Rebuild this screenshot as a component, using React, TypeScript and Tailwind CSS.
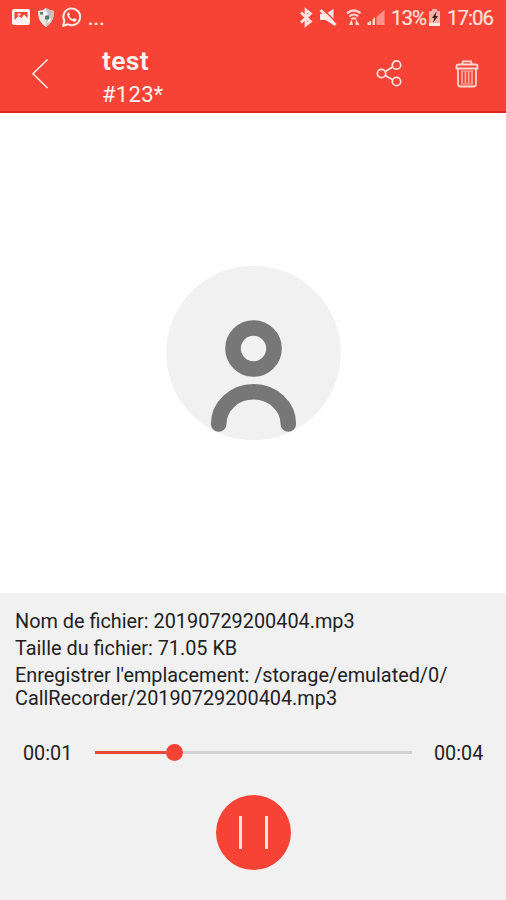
function StatusBar() {
  return (
    <div className="flex h-[36px] items-center text-[20.500px] leading-[36px] text-[#ffe3df]">
      <svg width="506" height="36" viewBox="0 0 506 36" className="-mr-[506px] shrink-0" fill="none">
        {/* gallery */}
        <path fillRule="evenodd" fill="#fff4f2" d="M14 9h14q2 0 2 2v12q0 2-2 2H14q-2 0-2-2V11q0-2 2-2Zm.5 3v8l4-4 3 2 2.500-3.500 3.500 3.500V12Z" />
        <path fill="#fff4f2" d="M17.500 13.500h3v2h-3Z" />
        {/* shield */}
        <path fill="#ebe8e4" d="M46 8q4 3 8 3c0 7-2 12-8 16-6-4-8-9-8-16q4 0 8-3Z" />
        <path fill="#c4c4be" d="M46 8q4 3 8 3c0 7-2 12-8 16Z" />
        <path fill="#5b7a70" d="M40 12h3v2.500h-3Zm5 3.500h4v4h-4Z" />
        <path fill="#fff" d="m43 13 3-2 2 3-3 2Zm5 7 3-2-1 4-3 1Z" />
        {/* whatsapp */}
        <path stroke="#ffebe8" strokeWidth="2" strokeLinejoin="round" d="m63 26 1.400-5a8.400 8.400 0 1 1 3.200 3.200Z" />
        <path fill="#ffebe8" d="M68.400 12.200c-1 .5-1.700 1.800-1.100 3.600 1 3 3.800 5.200 6.400 5.800 1.600.3 3-.8 3-2.400l-2.600-1.300-1.400 1.400c-1.800-.8-2.900-2-3.600-3.500l1.100-1.200Z" />
        {/* bluetooth */}
        <path stroke="#ffe3df" strokeWidth="2.7" d="m301 12.500 9.500 9-4.500 3.500V10l4.500 3.500-9.500 9" />
        {/* muted */}
        <path fill="#ffe9e6" d="M320 14h5.500l8-5v16l-8-5H320Z" />
        <path stroke="#f64336" strokeWidth="1.500" d="m322.500 8.500 14 14" />
        <path stroke="#ffe9e6" strokeWidth="2.800" d="m320.500 10 15 15" />
        {/* wifi */}
        <g stroke="#ffd5cf">
          <path strokeWidth="2.400" d="M347 13.300q6.800-5.600 13.600 0" />
          <path strokeWidth="2" d="M349.300 16.500q4.500-4 9 0M351.300 19.300q2.500-2 5 0" />
        </g>
        <path fill="#ffe3df" d="m351.500 19.500 1.500 5.500h-4Zm4.500 0 3.500 5.500h-4Z" />
        {/* signal */}
        <path fill="#ff9188" d="m376.500 17 8-7v15h-8Z" />
        <path fill="#ffd5cf" d="M367.500 25v-2.500l3.500-1.500v4Zm5 0v-5.500l2.500-2.500v8Z" />
        {/* battery */}
        <path fill="#ffb1a9" d="M432 9h5v2h3v15h-11V11h3Z" />
        <path fill="#ffe9e6" d="M429 23h11v3h-11Z" />
        <path fill="#352523" d="m436 12-4 6h2.200l-1.200 5 5-7h-2.500l1-4Z" />
      </svg>
      <span className="ml-[88px] w-[303px] tracking-[0.200px] [-webkit-text-stroke:0.500px_#ffe3df]">...</span>
      <span className="w-[56px] tracking-[-1px] [-webkit-text-stroke:0.200px_#ffe3df]">13%</span>
      <span className="tracking-[-1px] [-webkit-text-stroke:0.200px_#ffe3df]">17:06</span>
    </div>
  )
}

function Header() {
  return (
    <header className="h-[113px] shrink-0 border-b-2 border-[#e0251c] bg-[#f64336] text-[#fff3f1]">
      <StatusBar />
      <div className="flex h-[75px] items-start">
        <button aria-label="Retour" className="ml-[31px] mt-[22px]">
          <svg width="18" height="32" viewBox="0 0 18 32" fill="none" stroke="#ffe9e6" strokeWidth="1.6">
            <path d="M16.500 1.500 2 15.700l14.500 14.300" />
          </svg>
        </button>
        <div className="ml-[53px] mt-[10px] w-[273px]">
          <h1 className="text-[26.500px] font-semibold leading-[30px] tracking-[0.300px]">test</h1>
          <p className="mt-[6px] text-[22px] leading-[26px] tracking-[0.300px]">#123*</p>
        </div>
        <button aria-label="Partager" className="mt-[23px]">
          <svg width="28" height="30" viewBox="0 0 28 30" fill="none" stroke="#ffe5e1" strokeWidth="1.7">
            <circle cx="6.500" cy="14.500" r="4.200" />
            <circle cx="21.500" cy="6" r="4.200" />
            <circle cx="21.500" cy="22.500" r="4.200" />
            <path d="m10.200 12.400 7.500-4.400m-7.500 8.500 7.500 4.200" />
          </svg>
        </button>
        <button aria-label="Supprimer" className="ml-[51px] mt-[23px]">
          <svg width="26" height="30" viewBox="0 0 26 30" fill="none" stroke="#ffd9d4" strokeWidth="1.8">
            <path d="M8 5.500 9 2.300h8L18 5.500M2.500 9.500V7.500q0-2 2-2h17q2 0 2 2v2ZM4 10v15q0 2.500 2.500 2.500h13q2.500 0 2.500-2.500V10" />
            <path stroke="#ffb3aa" strokeWidth="1.600" d="M8 12v12.500M11.400 12v12.500M14.700 12v12.500M18 12v12.500" />
            <path stroke="#ffb3aa" strokeWidth="1" d="M7 12h12M7 25h12" />
          </svg>
        </button>
      </div>
    </header>
  )
}

function Avatar() {
  return (
    <svg width="176" height="176" viewBox="0 0 176 176" fill="none">
      <circle cx="88.500" cy="88" r="87.300" fill="#f1f1f1" />
      <g stroke="#777" strokeWidth="15.600" strokeLinecap="round">
        <circle cx="88.500" cy="83.500" r="20.500" />
        <path d="M53.700 159a34.800 32.300 0 0 1 69.600 0" />
      </g>
    </svg>
  )
}

function Player() {
  return (
    <section className="h-[307px] shrink-0 bg-[#f1f1f1] text-[#222]">
      <div className="flex flex-col gap-[3px] pl-[15px] pt-[17px] text-[19.850px] leading-[24px]">
        <p>Nom de fichier: 20190729200404.mp3</p>
        <p>Taille du fichier: 71.05 KB</p>
        <p className="leading-[23px]">
          Enregistrer l'emplacement: /storage/emulated/0/
          <br />
          CallRecorder/20190729200404.mp3
        </p>
      </div>

      <div className="mt-[31px] flex h-[26px] items-center pl-[23px] text-[19.800px]">
        <span className="w-[72px]">00:01</span>
        <div className="-mt-[3px] flex w-[317px] items-center">
          <div className="h-[3px] w-[71px] bg-[#e8453b]" />
          <div className="size-[17px] rounded-full bg-[#f64336]" />
          <div className="h-[3px] flex-1 bg-[#d2d2d2]" />
        </div>
        <span className="ml-[22px]">00:04</span>
      </div>

      <button
        aria-label="Pause"
        className="mx-auto mt-[28px] flex size-[75px] items-center justify-center gap-[23px] rounded-full bg-[#f64336]"
      >
        <span className="h-[33px] w-[3px] bg-[#ffe3df]" />
        <span className="h-[33px] w-[3px] bg-[#ffe3df]" />
      </button>
    </section>
  )
}

export default function App() {
  return (
    <div className="flex h-[900px] w-[506px] flex-col overflow-hidden bg-white font-[Roboto,sans-serif]">
      <Header />
      <main className="flex flex-1 items-center justify-center">
        <Avatar />
      </main>
      <Player />
    </div>
  )
}
